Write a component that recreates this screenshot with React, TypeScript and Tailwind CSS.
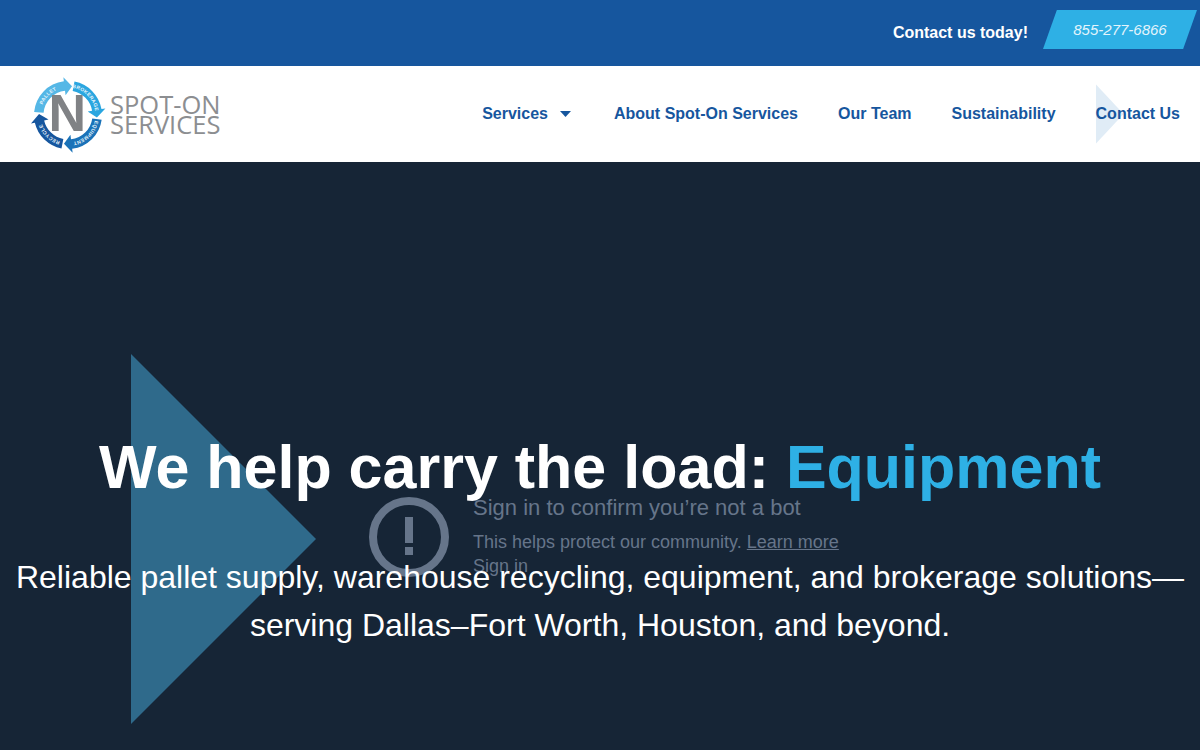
import React from "react";

const navItems = ["About Spot-On Services", "Our Team", "Sustainability"];

// clockwise degrees from 12 o'clock, logo ring centre is 39,49
const pt = (deg: number, r: number) => {
  const a = ((deg - 90) * Math.PI) / 180;
  return `${(39 + r * Math.cos(a)).toFixed(2)} ${(49 + r * Math.sin(a)).toFixed(2)}`;
};

function arrowPath(from: number, to: number) {
  const tip = to + 15;
  return [
    `M${pt(from, 34)}`,
    `A34 34 0 0 1 ${pt(to, 34)}`,
    `L${pt(to, 38)}`,
    `L${pt(tip, 29)}`,
    `L${pt(to, 20)}`,
    `L${pt(to, 24.5)}`,
    `A24.5 24.5 0 0 0 ${pt(from, 24.5)}`,
    "Z",
  ].join(" ");
}

function labelPath(from: number, to: number) {
  return `M${pt(from, 27.5)} A27.5 27.5 0 0 1 ${pt(to, 27.5)}`;
}

const ringParts = [
  { id: "pallet", label: "PALLET", from: 275, to: 353, color: "#55b7e6" },
  { id: "brokerage", label: "BROKERAGE", from: 11, to: 80, color: "#2aa6e0" },
  { id: "equipment", label: "EQUIPMENT", from: 98, to: 173, color: "#1a72b8" },
  { id: "recycle", label: "RECYCLE", from: 191, to: 257, color: "#16569e" },
];

function Logo() {
  return (
    <div className="flex items-center">
      <svg width="80" height="96" viewBox="0 0 80 96" className="shrink-0">
        {ringParts.map((p) => (
          <g key={p.id}>
            <path d={arrowPath(p.from, p.to)} fill={p.color} />
            <path id={`ring-${p.id}`} d={labelPath(p.from, p.to)} fill="none" />
            <text fontFamily="Liberation Sans" fontSize="5" fontWeight="700" fill="#e6f4fb" letterSpacing="0.3">
              <textPath href={`#ring-${p.id}`} startOffset="50%" textAnchor="middle">
                {p.label}
              </textPath>
            </text>
          </g>
        ))}
        <text x="19.5" y="65" fontFamily="Liberation Sans" fontWeight="700" fontSize="52" fill="#808285">
          N
        </text>
      </svg>
      <div className="ml-[1px] font-['Open_Sans',sans-serif] text-[25.5px] font-normal leading-[20px] text-[#8c8e91]">
        <div>SPOT-ON</div>
        <div>SERVICES</div>
      </div>
    </div>
  );
}

export default function App() {
  return (
    <div className="flex h-[750px] w-[1200px] flex-col overflow-hidden font-['Liberation_Sans',sans-serif]">
      <div className="flex h-[66px] items-center justify-end bg-[#16569e] pr-[3px]">
        <span className="mr-[15px] text-base font-bold text-white">Contact us today!</span>
        <a className="mb-[7px] flex h-[39px] w-[154px] items-center justify-center pt-[1px] text-[15px] italic text-[#e2f4fc] bg-[#2eb0e5] [clip-path:polygon(9%_0,100%_0,91%_100%,0_100%)]">
          855-277-6866
        </a>
      </div>

      <header className="flex h-[96px] items-center justify-between bg-white pl-[29px] pr-[20px]">
        <Logo />
        <nav className="flex items-center gap-10 text-base font-bold text-[#16569e]">
          <a className="flex items-center gap-[12px]">
            Services
            <svg width="11" height="6" viewBox="0 0 11 6" className="mr-[3px]">
              <path d="M0 0 H11 L5.5 6 Z" fill="#16569e" />
            </svg>
          </a>
          {navItems.map((item) => (
            <a key={item}>{item}</a>
          ))}
          <a className="relative">
            <span className="absolute -top-[18px] left-0 h-[60px] w-[28px] bg-[#e0ecf6] [clip-path:polygon(0_0,100%_50%,0_100%)]" />
            <span className="relative">Contact Us</span>
          </a>
        </nav>
      </header>

      <section className="relative flex flex-1 flex-col items-center bg-[#162536] pt-[267px] text-center">
        <div className="absolute left-[131px] top-[192px] h-[370px] w-[185px] bg-[#2f6a8b] [clip-path:polygon(0_0,100%_50%,0_100%)]" />

        {/* blocked video message sitting under the hero copy */}
        <div className="absolute left-[369px] top-[335px] flex text-left text-[#66758a]">
          <svg width="80" height="80" viewBox="0 0 80 80" className="shrink-0">
            <circle cx="40" cy="40" r="36" fill="none" stroke="#66758a" strokeWidth="8" />
            <rect x="36" y="20" width="8" height="26" fill="#66758a" />
            <rect x="36" y="50" width="8" height="8" fill="#66758a" />
          </svg>
          <div className="ml-[24px] -mt-[2px]">
            <div className="text-[22px] leading-[26px]">Sign in to confirm you’re not a bot</div>
            <div className="mt-[9px] text-lg leading-[24px]">
              This helps protect our community. <span className="underline">Learn more</span>
            </div>
            <div className="text-lg leading-[24px]">Sign in</div>
          </div>
        </div>

        <h1 className="relative text-[61px] font-bold leading-[76px] text-white">
          We help carry the load: <span className="text-[#2eb0e5]">Equipment</span>
        </h1>
        <p className="relative mt-[48px] w-[1200px] text-[32px] leading-[48px] text-white">
          Reliable pallet supply, warehouse recycling, equipment, and brokerage solutions—
          <br />
          serving Dallas–Fort Worth, Houston, and beyond.
        </p>
      </section>
    </div>
  );
}
